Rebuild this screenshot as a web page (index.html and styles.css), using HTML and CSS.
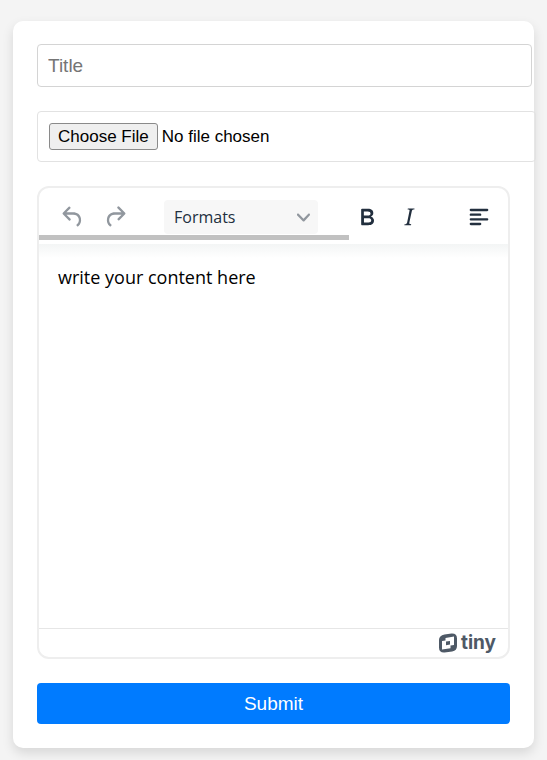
FILE: index.html
```html
<!DOCTYPE html>
<html lang="en">
<head>
<meta charset="utf-8">
<meta name="viewport" content="width=device-width, initial-scale=1">
<title>New post</title>
<link rel="stylesheet" href="styles.css">
</head>
<body>
<form class="card">
  <input class="field title-field" type="text" placeholder="Title" aria-label="Title">
  <input class="field file-field" type="file" aria-label="Attachment">
  <div class="editor">
    <div class="toolbar">
      <div class="group">
        <button class="tool muted" type="button" aria-label="Undo"><svg viewBox="0 0 24 24"><path d="M6.4 8H12c3.7 0 6.2 2 6.8 5.1.6 2.7-.4 5.6-2.3 6.8a1 1 0 0 1-1-1.8c1.1-.6 1.8-2.7 1.4-4.6-.5-2.1-2.1-3.5-4.9-3.5H6.4l3.3 3.3a1 1 0 1 1-1.4 1.4l-5-5a1 1 0 0 1 0-1.4l5-5a1 1 0 0 1 1.4 1.4L6.4 8Z"/></svg></button>
        <button class="tool muted" type="button" aria-label="Redo"><svg viewBox="0 0 24 24"><path d="M17.6 10H12c-2.8 0-4.4 1.4-4.9 3.5-.4 2 .3 4 1.4 4.6a1 1 0 1 1-1 1.8c-2-1.2-2.9-4.1-2.3-6.8.6-3 3-5.1 6.8-5.1h5.6l-3.3-3.3a1 1 0 1 1 1.4-1.4l5 5a1 1 0 0 1 0 1.4l-5 5a1 1 0 0 1-1.4-1.4l3.3-3.3Z"/></svg></button>
      </div>
      <button class="formats" type="button"><span>Formats</span><svg viewBox="0 0 10 10"><path d="M8.7 2.2c.3-.3.8-.3 1 0 .4.4.4.9 0 1.2L5.7 7.8c-.3.3-.9.3-1.2 0L.2 3.4a.8.8 0 0 1 0-1.2c.3-.3.8-.3 1.1 0L5 6l3.7-3.8Z"/></svg></button>
      <div class="group">
        <button class="tool" type="button" aria-label="Bold"><svg viewBox="0 0 24 24"><path d="M7.8 19c-.3 0-.5 0-.6-.2l-.2-.5V5.7c0-.2 0-.4.2-.5l.6-.2h5c1.5 0 2.7.3 3.5 1 .7.6 1.1 1.4 1.1 2.5a3 3 0 0 1-.6 1.9c-.4.6-1 1-1.6 1.2.4.1.9.3 1.3.6s.8.7 1 1.2c.4.4.5 1 .5 1.6 0 1.3-.4 2.3-1.3 3-.8.7-2.1 1-3.8 1H7.8Zm5-8.3c.6 0 1.2-.1 1.6-.5.4-.3.6-.7.6-1.3 0-1.1-.8-1.7-2.3-1.7H9.3v3.5h3.4Zm.5 6c.7 0 1.3-.1 1.7-.4.4-.4.6-.9.6-1.5s-.2-1-.7-1.4c-.4-.3-1-.4-2-.4H9.4v3.8h4Z"/></svg></button>
        <button class="tool" type="button" aria-label="Italic"><svg viewBox="0 0 24 24"><path d="m16.7 4.7-.1.9h-.3c-.6 0-1 0-1.4.3-.3.3-.4.6-.5 1.1l-2.1 9.8v.6c0 .5.4.8 1.4.8h.2l-.2.8H8l.2-.8h.2c1.1 0 1.8-.5 2-1.5l2-9.8.1-.5c0-.6-.4-.8-1.4-.8h-.3l.2-.9h5.8Z"/></svg></button>
      </div>
      <button class="tool" type="button" aria-label="Align left"><svg viewBox="0 0 24 24"><path d="M5 5h14a1 1 0 0 1 0 2H5a1 1 0 1 1 0-2Zm0 4h8a1 1 0 0 1 0 2H5a1 1 0 1 1 0-2Zm0 4h14a1 1 0 0 1 0 2H5a1 1 0 0 1 0-2Zm0 4h8a1 1 0 0 1 0 2H5a1 1 0 0 1 0-2Z"/></svg></button>
    </div>
    <div class="track"><div class="thumb"></div></div>
    <div class="content" contenteditable="true" role="textbox" aria-label="Content" spellcheck="false">write your content here</div>
    <div class="status">
      <a class="brand" href="#">
        <svg viewBox="0 0 20 20"><path fill-rule="evenodd" d="M6.500 1.500 13.500.5Q19 .2 19 5.500v7.500q0 4.500-4.800 5.500l-7.700 1Q1 19.800 1 14.500V7q0-4.500 5.500-5.500ZM7.500 4.900 16 3.600V12l-3.500.5v2.700L4 16.500V8.100l3.500-.5ZM8 8.600v3.600l4-.6V8Z"/></svg>
        <span>tiny</span>
      </a>
    </div>
  </div>
  <button class="submit" type="submit">Submit</button>
</form>
</body>
</html>
```
FILE: styles.css
```css
body {
  margin: 0;
  padding: 21px 13px 12px;
  background: #f4f4f4;
  font-family: "Liberation Sans", Arial, sans-serif;
  overflow-x: hidden;
}

button {
  border: 0;
  padding: 0;
  background: none;
  font: inherit;
}

.card {
  display: flex;
  flex-direction: column;
  gap: 24px;
  padding: 23px 24px 24px;
  background: #fff;
  border-radius: 10px;
  box-shadow: 0 5px 12px rgba(0, 0, 0, 0.12);
}

.field {
  width: 100%;
  border: 1px solid #d4d4d4;
  border-radius: 4px;
  background: none;
  font-family: inherit;
}

.title-field {
  height: 21px;
  padding: 10px;
  font-size: 19px;
}

.title-field::placeholder {
  color: #757575;
}

.file-field {
  height: 27px;
  padding: 11px;
  padding-right: 13px;
  border-color: #e2e2e2;
  font-size: 17px;
}

.file-field::file-selector-button {
  height: 27px;
  margin-right: 4px;
  padding: 0 8px;
  border: 1px solid #8a8a8a;
  border-radius: 3px;
  background: #efefef;
  color: #000;
  font: inherit;
}

.editor {
  display: flex;
  flex-direction: column;
  border: 2px solid #eee;
  border-radius: 12px;
  overflow: hidden;
  font-family: "Open Sans", "Noto Sans", sans-serif;
}

.toolbar {
  display: flex;
  align-items: center;
  gap: 28px;
  height: 34px;
  padding: 12px 8px 1px 13px;
}

.group {
  display: flex;
}

.tool {
  display: flex;
  flex: none;
  align-items: center;
  justify-content: center;
  width: 42px;
  height: 34px;
}

.tool svg {
  width: 28px;
  height: 28px;
  fill: #222f3e;
}

.muted svg {
  fill: #91979e;
}

.formats {
  display: flex;
  flex: none;
  align-items: center;
  justify-content: space-between;
  width: 154px;
  height: 34px;
  padding: 0 8px 0 10px;
  border-radius: 4px;
  background: #f7f7f7;
  color: #222f3e;
  font-size: 16px;
}

.formats svg {
  width: 13px;
  height: 13px;
  fill: #91979e;
}

.track {
  height: 9px;
}

.thumb {
  width: 66%;
  height: 5px;
  background: #c1c1c1;
}

.content {
  min-height: 348px;
  padding: 18px 19px;
  outline: 0;
  background: linear-gradient(#f3f5f5, #fff 14px);
  color: #000;
  font-size: 18px;
  line-height: 30px;
}

.status {
  display: flex;
  justify-content: flex-end;
  height: 28px;
  padding: 0 12px;
  border-top: 1px solid #e6e6e6;
}

.brand {
  display: flex;
  align-items: center;
  gap: 3px;
  color: #4e5966;
  font-family: Inter, sans-serif;
  font-size: 19px;
  font-weight: 700;
  line-height: 24px;
  text-decoration: none;
}

.brand svg {
  width: 20px;
  height: 20px;
  fill: currentColor;
}

.submit {
  height: 41px;
  border-radius: 4px;
  background: #007bff;
  color: #fff;
  font-size: 19px;
}
```
